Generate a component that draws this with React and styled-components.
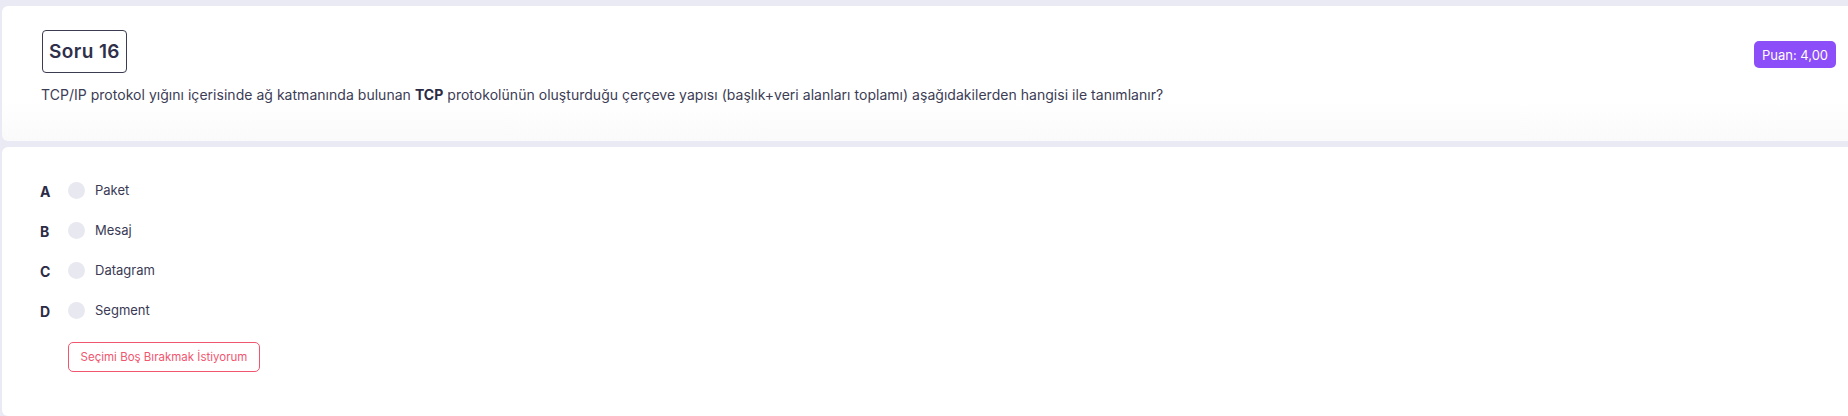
import React from "react";
import styled, { createGlobalStyle } from "styled-components";

const Global = createGlobalStyle`
  html, body { margin: 0; padding: 0; background: #e9eaf3; }
  body { font-family: "Inter", "Noto Sans", sans-serif; }
  * { box-sizing: border-box; }
`;

const Page = styled.div`
  display: flex;
  flex-direction: column;
  gap: 6px;
  padding: 6px 0 0 2px;
  height: 416px;
  overflow: hidden;
`;

const Card = styled.section`
  background: ${(p) => (p.$fade ? "linear-gradient(#fff 70%, #fafafa)" : "#fff")};
  border-radius: 6px 0 0 6px;
  padding: ${(p) => p.$pad};
  flex: ${(p) => (p.$grow ? "1" : "none")};
`;

const HeadRow = styled.div`
  display: flex;
  justify-content: space-between;
  align-items: flex-start;
`;

const Title = styled.div`
  border: 1px solid #3b3b52;
  border-radius: 4px;
  height: 43px;
  width: 85px;
  display: flex;
  align-items: center;
  justify-content: center;
  font-size: 19px;
  font-weight: 600;
  letter-spacing: 0.4px;
  color: #2f2f4a;
`;

const Badge = styled.div`
  margin-top: 11px;
  margin-right: 12px;
  background: #8c4ef8;
  color: #fff;
  border-radius: 5px;
  height: 27px;
  width: 82px;
  display: flex;
  align-items: center;
  justify-content: center;
  font-size: 13px;
`;

const Question = styled.p`
  margin: 13px 0 0 -1px;
  font-size: 14px;
  letter-spacing: 0.03px;
  color: #3c3c55;
  b { font-weight: 700; color: #2b2b45; }
`;

const Options = styled.div`
  display: flex;
  flex-direction: column;
  gap: 20px;
`;

const Row = styled.label`
  display: flex;
  align-items: center;
  height: 20px;
`;

const Letter = styled.span`
  width: 28px;
  font-size: 14px;
  font-weight: 700;
  color: #2b2b45;
  padding-top: 3px;
`;

const Radio = styled.span`
  width: 17px;
  height: 17px;
  border-radius: 50%;
  background: #e8e9f0;
  margin-right: 10px;
`;

const OptText = styled.span`
  font-size: 13px;
  color: #3a3a55;
`;

const EmptyBtn = styled.button`
  margin: 22px 0 0 28px;
  width: 192px;
  height: 30px;
  border: 1px solid #f2556f;
  border-radius: 5px;
  background: #fff;
  color: #f2556f;
  font-family: inherit;
  font-size: 11.5px;
  padding: 0;
`;

const options = [
  ["A", "Paket"],
  ["B", "Mesaj"],
  ["C", "Datagram"],
  ["D", "Segment"],
];

export default function App() {
  return (
    <>
      <Global />
      <Page>
        <Card $fade $pad="24px 0 0 40px" style={{ height: 135 }}>
          <HeadRow>
            <Title>Soru 16</Title>
            <Badge>Puan: 4,00</Badge>
          </HeadRow>
          <Question>
            TCP/IP protokol yığını içerisinde ağ katmanında bulunan <b>TCP</b> protokolünün oluşturduğu çerçeve yapısı (başlık+veri alanları toplamı) aşağıdakilerden hangisi ile tanımlanır?
          </Question>
        </Card>
        <Card $grow $pad="33px 0 0 38px">
          <Options>
            {options.map(([l, t]) => (
              <Row key={l}>
                <Letter>{l}</Letter>
                <Radio />
                <OptText>{t}</OptText>
              </Row>
            ))}
          </Options>
          <EmptyBtn>Seçimi Boş Bırakmak İstiyorum</EmptyBtn>
        </Card>
      </Page>
    </>
  );
}
